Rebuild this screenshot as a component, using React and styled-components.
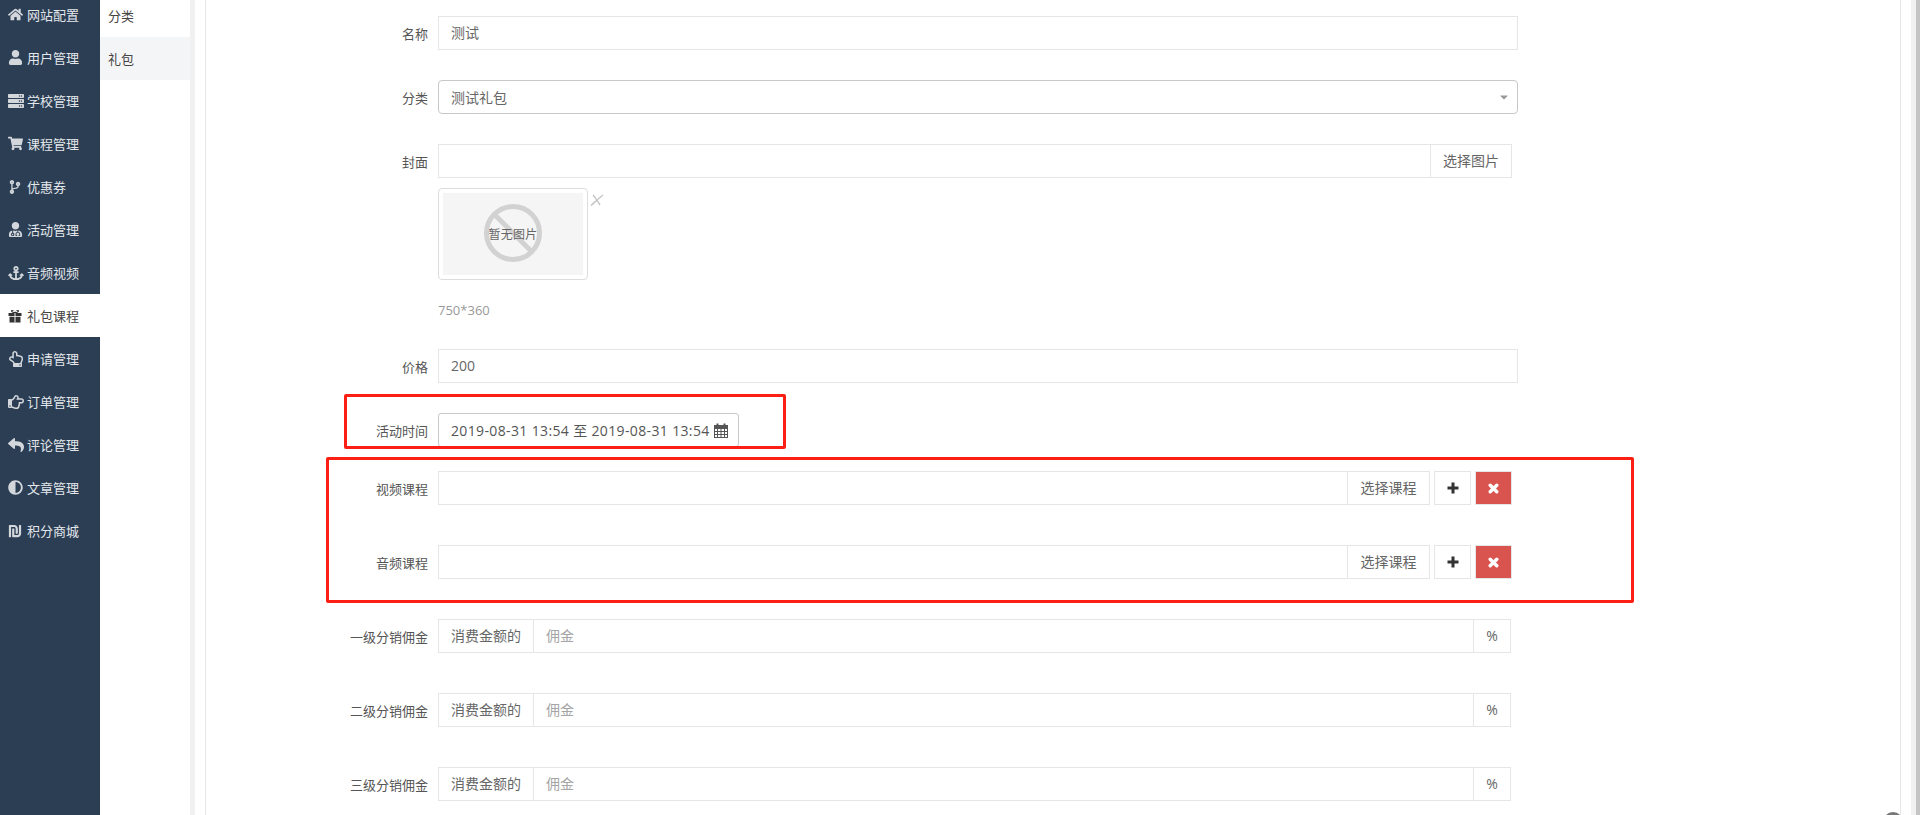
import React from "react";
import styled, { createGlobalStyle } from "styled-components";
import {
  FaHome, FaUser, FaServer, FaShoppingCart, FaCodeBranch, FaUserMd, FaAnchor,
  FaRegHandPointUp, FaRegHandPointRight, FaReply, FaAdjust, FaShekelSign, FaCaretDown,
} from "react-icons/fa";

const GlobalStyle = createGlobalStyle`
  html, body { margin: 0; padding: 0; background: #fff; overflow: hidden; }
  * { box-sizing: border-box; }
  body {
    font-family: "Open Sans", "Noto Sans CJK SC", sans-serif;
    font-size: 14px;
    color: #676a6c;
  }
`;

const Shell = styled.div`
  position: relative;
  display: flex;
  width: 1920px;
  height: 815px;
  overflow: hidden;
`;

const Sidebar = styled.nav`
  flex: 0 0 100px;
  background: #2b3e53;
`;

const NavList = styled.ul`
  list-style: none;
  margin: -7px 0 0;
  padding: 0;
`;

const NavItem = styled.li`
  display: flex;
  align-items: center;
  height: 43px;
  padding-left: 8px;
  font-size: 13px;
  color: ${(p) => (p.$active ? "#444" : "#e3e7ec")};
  background: ${(p) => (p.$active ? "#fff" : "transparent")};
  white-space: nowrap;
  svg {
    flex: 0 0 auto;
    color: ${(p) => (p.$active ? "#333" : "#d3d7dc")};
  }
`;

const IconSlot = styled.span`
  display: inline-flex;
  width: 19px;
`;

const SubNav = styled.div`
  flex: 0 0 90px;
  background: #fff;
`;

const SubItem = styled.div`
  display: flex;
  align-items: center;
  height: 43px;
  margin-top: ${(p) => (p.$first ? "-6px" : "0")};
  padding-left: 8px;
  font-size: 13px;
  color: #444;
  background: ${(p) => (p.$active ? "#f4f5f7" : "#fff")};
`;

const Gutter = styled.div`
  flex: 0 0 5px;
  background: #f1f1f2;
`;

const Spacer = styled.div`
  flex: 0 0 10px;
  background: #fff;
`;

const Main = styled.main`
  flex: 1;
  border-left: 1px solid #e7e7e7;
  border-right: 1px solid #e7e7e7;
  padding-top: 16px;
  background: #fff;
`;

const RightEdge = styled.div`
  flex: 0 0 19px;
  display: flex;
  justify-content: flex-end;
`;

const ScrollTrack = styled.div`
  width: 9px;
  height: 100%;
  background: #f1f1f1;
  border-right: 4px solid #c4c4c4;
`;

const Row = styled.div`
  display: flex;
  align-items: flex-start;
  margin-bottom: ${(p) => p.$gap ?? 30}px;
`;

const Label = styled.label`
  flex: 0 0 232px;
  height: 34px;
  line-height: 36px;
  padding-right: 10px;
  text-align: right;
  font-size: 13px;
  color: #555;
`;

const Field = styled.div`
  display: flex;
  width: ${(p) => p.$width}px;
  height: 34px;
`;

const Input = styled.div`
  flex: ${(p) => (p.$width ? `0 0 ${p.$width}px` : 1)};
  height: 34px;
  line-height: 32px;
  padding: 0 12px;
  border: 1px solid #e5e6e7;
  margin-left: ${(p) => (p.$overlap ? "-1px" : "0")};
  color: ${(p) => (p.$muted ? "#a5a5a5" : "#666")};
`;

const Addon = styled.div`
  flex: 0 0 ${(p) => p.$width}px;
  height: 34px;
  line-height: 32px;
  text-align: center;
  border: 1px solid #e5e6e7;
  margin-left: ${(p) => (p.$overlap ? "-1px" : "0")};
  color: #666;
`;

const Select = styled.div`
  display: flex;
  align-items: center;
  justify-content: space-between;
  width: 1080px;
  height: 34px;
  padding: 0 7px 0 12px;
  border: 1px solid #c8c8c8;
  border-radius: 4px;
  color: #666;
  svg { color: #999; font-size: 12px; }
`;

const IconButton = styled.button`
  display: flex;
  align-items: center;
  justify-content: center;
  width: 37px;
  height: 34px;
  margin-left: ${(p) => p.$gap}px;
  padding: 0;
  border: 1px solid #e5e6e7;
  background: ${(p) => (p.$danger ? "#d9534f" : "#fff")};
  color: ${(p) => (p.$danger ? "#fff" : "#333")};
`;

const DateRange = styled.div`
  display: flex;
  align-items: center;
  width: 301px;
  height: 34px;
  padding-left: 12px;
  gap: 4px;
  border: 1px solid #c8c8c8;
  border-radius: 3px;
  letter-spacing: 0.36px;
  color: #555;
  white-space: nowrap;
`;

const Preview = styled.div`
  position: relative;
  width: 150px;
  height: 92px;
  margin-left: 232px;
  padding: 4px;
  border: 1px solid #ddd;
  border-radius: 4px;
`;

const PreviewInner = styled.div`
  position: relative;
  display: flex;
  align-items: center;
  justify-content: center;
  height: 100%;
  background: #f5f5f5;
  font-size: 12px;
  color: #666;
`;

const NoImage = styled.svg`
  position: absolute;
  left: 41px;
  top: 11px;
`;

const PreviewText = styled.span`
  position: relative;
  letter-spacing: 0.3px;
`;

const RemoveMark = styled.span`
  position: absolute;
  left: 151px;
  top: 5px;
  svg { display: block; }
`;

const Hint = styled.div`
  margin: 21px 0 30px 232px;
  height: 18px;
  line-height: 18px;
  font-size: 13px;
  color: #999;
`;

const Annotation = styled.div`
  position: absolute;
  left: ${(p) => p.$x}px;
  top: ${(p) => p.$y}px;
  width: ${(p) => p.$w}px;
  height: ${(p) => p.$h}px;
  border: 3px solid #fd1f13;
  border-radius: 2px;
`;

const ToTop = styled.div`
  position: absolute;
  left: 1883px;
  top: 812px;
  width: 20px;
  height: 20px;
  border-radius: 50%;
  background: #777;
`;

// font awesome 4 look, the react-icons set has the newer thinner ones
const GiftIcon = () => (
  <svg width="14" height="14" viewBox="0 0 14 14" fill="currentColor">
    <path d="M0.5 4h13v3h-13z M1.5 7.8h11V13.5h-11z" />
    <path d="M7 4 C5 4 3 3.6 3 2 C3 0.6 5.5 0.3 7 3 C8.5 0.3 11 0.6 11 2 C11 3.6 9 4 7 4z M7 2.9 C6 1.8 4.4 1.4 4.4 2.2 C4.4 2.9 6 3.1 7 2.9z M7 2.9 C8 3.1 9.6 2.9 9.6 2.2 C9.6 1.4 8 1.8 7 2.9z" fillRule="evenodd" />
    <path d="M6.2 4h1.6v9.5H6.2z" fill="#fff" opacity="0.6" />
  </svg>
);

const CalendarIcon = () => (
  <svg width="14" height="15" viewBox="0 0 14 15" fill="none" stroke="#555" strokeWidth="1">
    <rect x="0.5" y="2.5" width="13" height="12" />
    <path d="M0.5 5.5h13M0.5 8.5h13M0.5 11.5h13M3.5 5.5v9M7 5.5v9M10.5 5.5v9" />
    <path d="M3.5 0.5v3M10.5 0.5v3" strokeWidth="2" />
    <rect x="0.5" y="2.5" width="13" height="3" fill="#555" />
  </svg>
);

const PlusIcon = () => (
  <svg width="12" height="12" viewBox="0 0 12 12" fill="currentColor">
    <path d="M4.5 0.5h3v4h4v3h-4v4h-3v-4h-4v-3h4z" />
  </svg>
);

const TimesIcon = () => (
  <svg width="11" height="11" viewBox="0 0 11 11" fill="none" stroke="currentColor" strokeWidth="3.4" strokeLinecap="round">
    <path d="M2.2 2.2l6.6 6.6M8.8 2.2l-6.6 6.6" />
  </svg>
);

const navItems = [
  { text: "网站配置", Icon: FaHome, size: 15 },
  { text: "用户管理", Icon: FaUser, size: 15 },
  { text: "学校管理", Icon: FaServer, size: 16 },
  { text: "课程管理", Icon: FaShoppingCart, size: 15 },
  { text: "优惠券", Icon: FaCodeBranch, size: 14 },
  { text: "活动管理", Icon: FaUserMd, size: 15 },
  { text: "音频视频", Icon: FaAnchor, size: 16 },
  { text: "礼包课程", Icon: GiftIcon, active: true },
  { text: "申请管理", Icon: FaRegHandPointUp, size: 16 },
  { text: "订单管理", Icon: FaRegHandPointRight, size: 16 },
  { text: "评论管理", Icon: FaReply, size: 16 },
  { text: "文章管理", Icon: FaAdjust, size: 15 },
  { text: "积分商城", Icon: FaShekelSign, size: 14 },
];

const CourseRow = ({ label }) => (
  <Row $gap={40}>
    <Label>{label}</Label>
    <Input $width={910} />
    <Addon $width={83} $overlap>选择课程</Addon>
    <IconButton $gap={4}><PlusIcon /></IconButton>
    <IconButton $gap={4} $danger><TimesIcon /></IconButton>
  </Row>
);

const CommissionRow = ({ label }) => (
  <Row $gap={40}>
    <Label>{label}</Label>
    <Field $width={1073}>
      <Addon $width={96}>消费金额的</Addon>
      <Input $muted $overlap>佣金</Input>
      <Addon $width={38} $overlap>%</Addon>
    </Field>
  </Row>
);

export default function App() {
  return (
    <Shell>
      <GlobalStyle />
      <Sidebar>
        <NavList>
          {navItems.map(({ text, Icon, size, active }) => (
            <NavItem key={text} $active={active}>
              <IconSlot><Icon size={size} /></IconSlot>
              {text}
            </NavItem>
          ))}
        </NavList>
      </Sidebar>
      <SubNav>
        <SubItem $first>分类</SubItem>
        <SubItem $active>礼包</SubItem>
      </SubNav>
      <Gutter />
      <Spacer />
      <Main>
        <Row>
          <Label>名称</Label>
          <Input $width={1080}>测试</Input>
        </Row>
        <Row>
          <Label>分类</Label>
          <Select>测试礼包<FaCaretDown /></Select>
        </Row>
        <Row $gap={10}>
          <Label>封面</Label>
          <Input $width={993} />
          <Addon $width={82} $overlap>选择图片</Addon>
        </Row>
        <Preview>
          <PreviewInner>
            <NoImage width="58" height="58" viewBox="0 0 58 58">
              <circle cx="29" cy="29" r="26.5" fill="none" stroke="#d2d2d2" strokeWidth="5" />
              <line x1="10" y1="10" x2="48" y2="48" stroke="#d2d2d2" strokeWidth="5" />
            </NoImage>
            <PreviewText>暂无图片</PreviewText>
          </PreviewInner>
          <RemoveMark>
            <svg width="14" height="12" viewBox="0 0 14 12">
              <path d="M1 11.5 C5 8 9 4 13 1 M3 1 C6 4 8 8 10 11" fill="none" stroke="#c4c4c4" strokeWidth="1.4" />
            </svg>
          </RemoveMark>
        </Preview>
        <Hint>750*360</Hint>
        <Row>
          <Label>价格</Label>
          <Input $width={1080}>200</Input>
        </Row>
        <Row $gap={24}>
          <Label>活动时间</Label>
          <DateRange>2019-08-31 13:54 至 2019-08-31 13:54 <CalendarIcon /></DateRange>
        </Row>
        <CourseRow label="视频课程" />
        <CourseRow label="音频课程" />
        <CommissionRow label="一级分销佣金" />
        <CommissionRow label="二级分销佣金" />
        <CommissionRow label="三级分销佣金" />
      </Main>
      <RightEdge><ScrollTrack /></RightEdge>
      <Annotation $x={344} $y={394} $w={442} $h={55} />
      <Annotation $x={326} $y={457} $w={1308} $h={146} />
      <ToTop />
    </Shell>
  );
}
